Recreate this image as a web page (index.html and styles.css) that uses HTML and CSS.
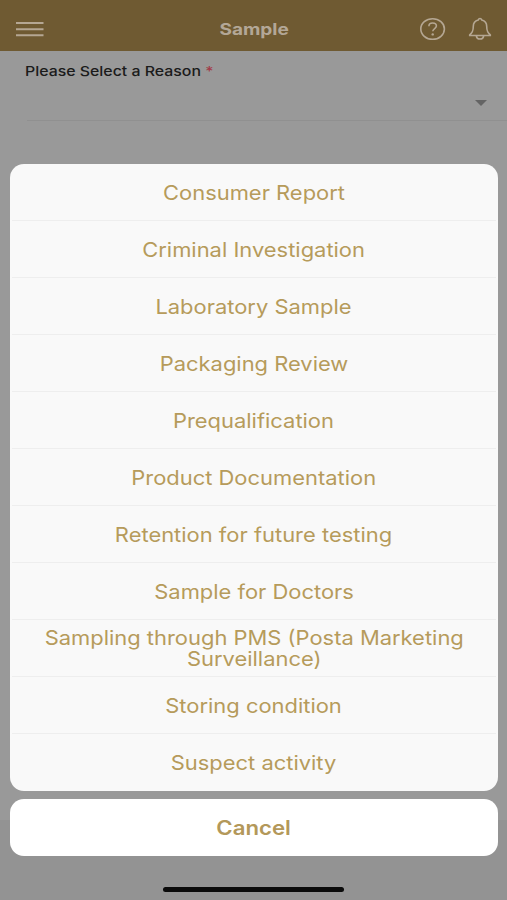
FILE: index.html
```html
<!DOCTYPE html>
<html lang="en">
<head>
<meta charset="utf-8">
<title>Sample</title>
<link rel="stylesheet" href="styles.css">
</head>
<body>
<div class="screen">
  <header class="bar">
    <svg class="menu" width="28" height="16" viewBox="0 0 28 16"><path d="M0 2h27.500M0 8.200h27.500M0 14.200h27.500"/></svg>
    <h1><span>Sample</span></h1>
    <div class="actions">
      <svg class="help" width="26" height="24" viewBox="0 0 26 24"><ellipse cx="12.600" cy="12" rx="11.800" ry="10.300"/><path d="M8.900 9.200C8.900 7.200 10.400 6 12.600 6s3.800 1.200 3.800 3.100c0 2.500-3.600 2.500-3.600 5.200"/><circle class="dot" cx="12.700" cy="17.400" r="1.200"/></svg>
      <svg class="bell" width="24" height="24" viewBox="0 0 24 24"><path d="M12 1.500c-1 0-1.500.700-1.800 1.500C6.900 3.900 5.300 6 5.300 9.200c0 4.700-.700 6.300-3.600 8.700v.600h20.600v-.600c-2.900-2.400-3.600-4-3.600-8.700 0-3.200-1.600-5.300-4.900-6.200-.300-.800-.800-1.500-1.800-1.500zM8.300 18.800c.300 2 1.800 3.200 3.700 3.200s3.400-1.200 3.700-3.200"/></svg>
    </div>
  </header>
  <div class="field">
    <label><span>Please Select a Reason <b>*</b></span></label>
    <div class="select"><i></i></div>
  </div>
  <div class="sheet">
    <ul class="options">
      <li><span>Consumer Report</span></li>
      <li><span>Criminal Investigation</span></li>
      <li><span>Laboratory Sample</span></li>
      <li><span>Packaging Review</span></li>
      <li><span>Prequalification</span></li>
      <li><span>Product Documentation</span></li>
      <li><span>Retention for future testing</span></li>
      <li><span>Sample for Doctors</span></li>
      <li><span>Sampling through PMS (Posta Marketing<br>Surveillance)</span></li>
      <li><span>Storing condition</span></li>
      <li><span>Suspect activity</span></li>
    </ul>
    <button class="cancel"><span>Cancel</span></button>
    <div class="home"></div>
  </div>
</div>
</body>
</html>
```
FILE: styles.css
```css
* { box-sizing: border-box; }
body { margin: 0; font-family: Inter, "Liberation Sans", sans-serif; }
.screen {
  position: relative;
  width: 507px;
  height: 900px;
  overflow: hidden;
  background: linear-gradient(#999 0, #999 820px, #939393 820px);
}
.bar {
  display: grid;
  grid-template-columns: 1fr auto 1fr;
  align-items: center;
  height: 51px;
  padding: 7px 15px 0 16px;
  background: #6f5a32;
}
.bar svg { fill: none; stroke: #b5a793; stroke-width: 1.6; }
.bar .menu { stroke-width: 2; }
.bar .dot { fill: #b5a793; stroke: none; }
.bar h1 { margin: 0; font-size: 16px; line-height: 20px; font-weight: 700; color: #b3a797; }
.bar h1 span { display: inline-block; transform: scaleX(1.19); }
.actions { display: flex; justify-content: flex-end; gap: 22px; }
.field { padding: 11px 0 0 25px; }
.field label { display: block; height: 18px; font-size: 13.5px; line-height: 18px; font-weight: 500; color: #1b1b1b; }
.field label span { display: inline-block; white-space: nowrap; transform: scaleX(1.176); transform-origin: left; }
.field b { font-weight: 500; color: #a33a48; }
.select { display: flex; justify-content: flex-end; height: 41px; margin-left: 2px; padding: 20px 20px 0 0; border-bottom: 1px solid #909090; }
.select i { width: 12px; height: 6px; background: #646464; clip-path: polygon(0 0, 100% 0, 50% 100%); }
.sheet { position: absolute; left: 10px; right: 9.500px; top: 164px; text-align: center; color: #b69b5b; }
.options { margin: 0 0 8px; padding: 0; list-style: none; height: 626.500px; border-radius: 14px; background: #f9f9f9; display: grid; grid-template-rows: repeat(11, 1fr); }
.options li { display: flex; align-items: center; justify-content: center; margin: 0 2px; padding-top: 2.500px; font-size: 20px; line-height: 20.500px; border-bottom: 1px solid #eee; }
.options li:last-child { border-bottom: 0; }
.options span { white-space: nowrap; transform: scaleX(1.096); }
.cancel { display: flex; align-items: center; justify-content: center; width: 100%; height: 57px; padding: 1px 0 0; border: 0; border-radius: 14px; background: #fff; color: #b3985a; font: 600 20px/24px Inter, "Liberation Sans", sans-serif; }
.cancel span { transform: scaleX(1.11); }
.home { width: 181px; height: 5px; margin: 31.500px auto 0; border-radius: 3px; background: #0b0b0b; }
```
